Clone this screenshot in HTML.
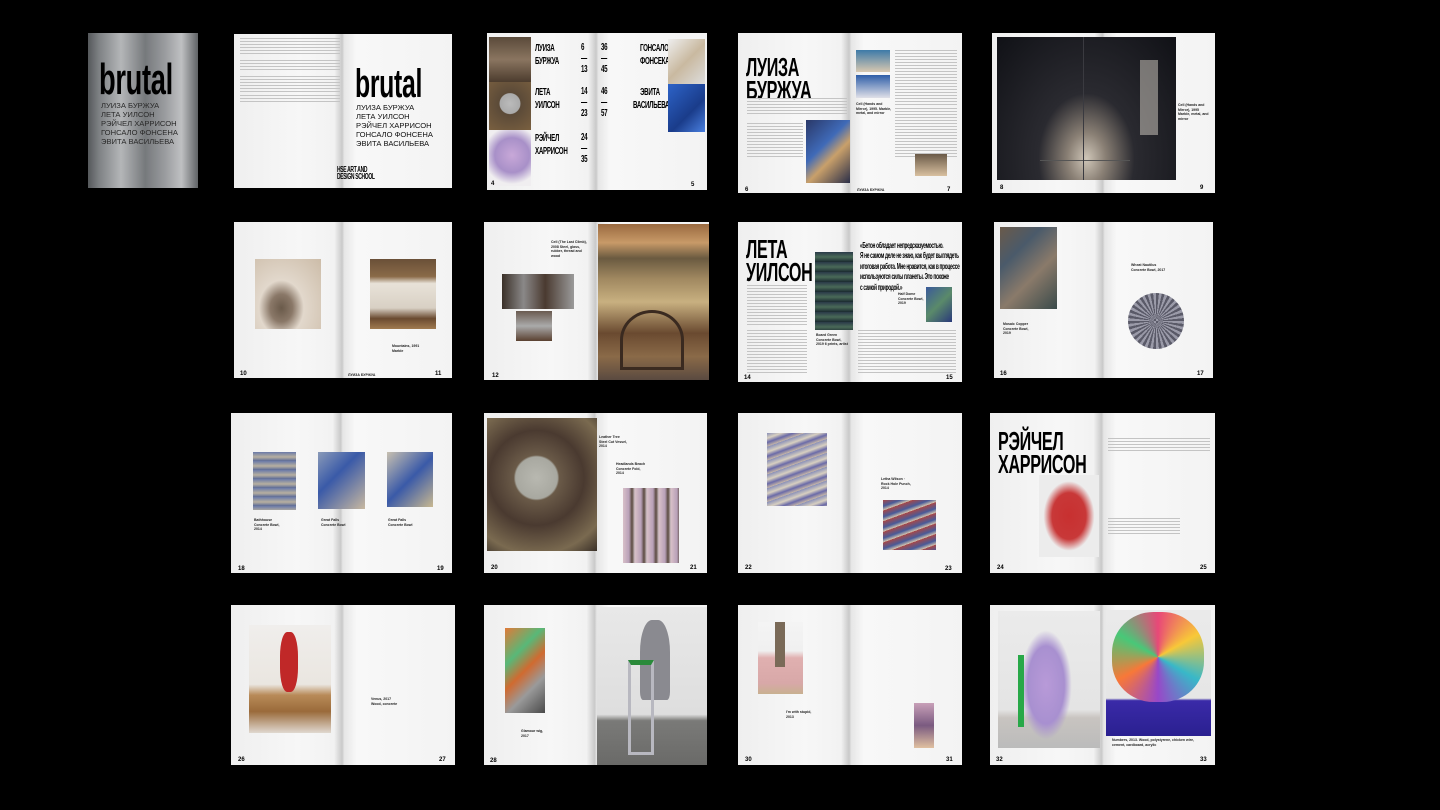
<!DOCTYPE html>
<html><head><meta charset="utf-8"><style>
body{margin:0;width:1440px;height:810px;background:#000;position:relative;overflow:hidden;font-family:"Liberation Sans",sans-serif}
div{position:absolute;box-sizing:border-box}
.s{background:linear-gradient(to right,#efefef 0,#f7f7f7 30%,#f2f2f2 46%,#c9c9c9 49.6%,#e6e6e6 50.6%,#f8f8f8 56%,#f3f3f3 100%)}
.h{font-family:"Liberation Sans","Noto Sans CJK SC",sans-serif;font-weight:bold;color:#000;line-height:.9;transform:scaleX(.62);transform-origin:left top;letter-spacing:-.5px;white-space:nowrap}
.n{font-size:6px;font-weight:bold;color:#000}
.c{font-size:3.5px;font-weight:bold;color:#222;line-height:1.3}
.tx{background:repeating-linear-gradient(#c4c4c4 0,#c4c4c4 1px,transparent 1px,transparent 3px)}
.nm{font-size:7.6px;line-height:9px;color:#111;white-space:nowrap}
</style></head><body>
<!-- cover -->
<div style="left:88px;top:33px;width:110px;height:155px;background:linear-gradient(to right,#55585b 0,#7e8184 10%,#b4b6b8 30%,#76797c 52%,#9a9c9f 70%,#bfc0c2 85%,#606366 100%)"></div>
<div class="h" style="left:99px;top:60px;font-size:44px">brutal</div>
<div class="nm" style="left:101px;top:101px;color:#2a2a2a">ЛУИЗА БУРЖУА<br>ЛЕТА УИЛСОН<br>РЭЙЧЕЛ ХАРРИСОН<br>ГОНСАЛО ФОНСЕНА<br>ЭВИТА ВАСИЛЬЕВА</div>

<!-- spread 1 -->
<div class="s" style="left:234px;top:34px;width:218px;height:154px"></div>
<div class="tx" style="left:240px;top:38px;width:100px;height:18px"></div>
<div class="tx" style="left:240px;top:60px;width:100px;height:12px"></div>
<div class="tx" style="left:240px;top:76px;width:100px;height:16px"></div>
<div class="tx" style="left:240px;top:95px;width:100px;height:8px"></div>
<div class="h" style="left:355px;top:66px;font-size:40px">brutal</div>
<div class="nm" style="left:356px;top:103px">ЛУИЗА БУРЖУА<br>ЛЕТА УИЛСОН<br>РЭЙЧЕЛ ХАРРИСОН<br>ГОНСАЛО ФОНСЕНА<br>ЭВИТА ВАСИЛЬЕВА</div>
<div class="h" style="left:337px;top:166px;font-size:8px">HSE ART AND<br>DESIGN SCHOOL</div>

<!-- spread 2 contents -->
<div class="s" style="left:487px;top:33px;width:220px;height:157px"></div>
<div style="left:489px;top:37px;width:42px;height:45px;background:linear-gradient(#5a4a3a,#8a7560 50%,#4c3c2e)"></div>
<div style="left:489px;top:82px;width:42px;height:48px;background:radial-gradient(circle at 50% 45%,#bbb 0,#aaa 30%,#5b4a38 32%,#7a6040 100%)"></div>
<div style="left:489px;top:130px;width:42px;height:56px;background:radial-gradient(circle at 55% 45%,#c8a8d8 0,#a890c8 45%,#f0eef0 75%)"></div>
<div class="h" style="left:535px;top:42px;font-size:10px;line-height:1.3">ЛУИЗА<br>БУРЖУА</div>
<div class="h" style="left:535px;top:86px;font-size:10px;line-height:1.3">ЛЕТА<br>УИЛСОН</div>
<div class="h" style="left:535px;top:132px;font-size:10px;line-height:1.3">РЭЙЧЕЛ<br>ХАРРИСОН</div>
<div class="h" style="left:581px;top:42px;font-size:10px;line-height:1.1">6<br>—<br>13</div>
<div class="h" style="left:581px;top:86px;font-size:10px;line-height:1.1">14<br>—<br>23</div>
<div class="h" style="left:581px;top:132px;font-size:10px;line-height:1.1">24<br>—<br>35</div>
<div class="h" style="left:601px;top:42px;font-size:10px;line-height:1.1">36<br>—<br>45</div>
<div class="h" style="left:601px;top:86px;font-size:10px;line-height:1.1">46<br>—<br>57</div>
<div class="h" style="left:640px;top:42px;font-size:10px;line-height:1.3">ГОНСАЛО<br>ФОНСЕКА</div>
<div class="h" style="left:633px;top:86px;font-size:10px;line-height:1.3">&nbsp;&nbsp;&nbsp;&nbsp;&nbsp;ЭВИТА<br>ВАСИЛЬЕВА</div>
<div style="left:668px;top:39px;width:37px;height:45px;background:linear-gradient(135deg,#eee,#c9b9a0 50%,#ddd)"></div>
<div style="left:668px;top:84px;width:37px;height:48px;background:linear-gradient(135deg,#2d63c8,#1a3c8a 60%,#4a80e0)"></div>
<div class="n" style="left:491px;top:181px">4</div><div class="n" style="left:691px;top:182px">5</div>

<!-- spread 3 -->
<div class="s" style="left:738px;top:33px;width:224px;height:160px"></div>
<div class="h" style="left:746px;top:56px;font-size:26px">ЛУИЗА<br>БУРЖУА</div>
<div class="tx" style="left:747px;top:98px;width:100px;height:18px"></div>
<div class="tx" style="left:747px;top:123px;width:56px;height:34px"></div>
<div style="left:806px;top:120px;width:44px;height:63px;background:linear-gradient(135deg,#2a3868,#3f6ab8 40%,#c9a06a 60%,#2a2e48)"></div>
<div style="left:856px;top:50px;width:34px;height:22px;background:linear-gradient(#3d7aa8,#d8c8b0)"></div>
<div style="left:856px;top:75px;width:34px;height:23px;background:linear-gradient(#2f5ea8,#e0e0e8)"></div>
<div class="c" style="left:856px;top:102px;width:36px">Cell (Hands and Mirror), 1995. Marble, metal, and mirror</div>
<div class="tx" style="left:895px;top:50px;width:62px;height:55px"></div>
<div class="tx" style="left:895px;top:108px;width:62px;height:50px"></div>
<div style="left:915px;top:154px;width:32px;height:22px;background:linear-gradient(#6a5a48,#d8c0a0)"></div>
<div class="n" style="left:745px;top:187px">6</div><div class="n" style="left:947px;top:187px">7</div>
<div class="c" style="left:857px;top:188px">ЛУИЗА БУРЖУА</div>

<!-- spread 4 -->
<div class="s" style="left:992px;top:33px;width:223px;height:160px"></div>
<div style="left:997px;top:37px;width:179px;height:143px;background:radial-gradient(ellipse at 50% 85%,#cfc6b8 0,#8a8075 15%,#2a2a30 38%,#101116 100%)"></div>
<div style="left:1040px;top:160px;width:90px;height:1px;background:#555"></div>
<div style="left:1083px;top:37px;width:1px;height:143px;background:#3a3a40"></div>
<div style="left:1140px;top:60px;width:18px;height:75px;background:#d8d2c8;opacity:.5"></div>
<div class="c" style="left:1178px;top:103px;width:34px">Cell (Hands and Mirror), 1995 Marble, metal, and mirror</div>
<div class="n" style="left:1000px;top:185px">8</div><div class="n" style="left:1200px;top:185px">9</div>

<!-- ROW 2 -->
<div class="s" style="left:234px;top:222px;width:218px;height:156px"></div>
<div style="left:255px;top:259px;width:66px;height:70px;background:radial-gradient(ellipse at 40% 70%,#6a5a4a 0,#8a7868 20%,#e2d8cc 40%,#ccbca8 100%)"></div>
<div style="left:370px;top:259px;width:66px;height:70px;background:linear-gradient(#6a5038 0,#8a6a48 25%,#e8e2d8 35%,#d8d0c4 70%,#6a4a30 85%,#a07a50 100%)"></div>
<div class="c" style="left:392px;top:344px">Mountains, 1991<br>Marble</div>
<div class="n" style="left:240px;top:371px">10</div><div class="n" style="left:435px;top:371px">11</div><div class="c" style="left:348px;top:373px">ЛУИЗА БУРЖУА</div>

<div class="s" style="left:484px;top:222px;width:225px;height:158px"></div>
<div style="left:598px;top:224px;width:111px;height:156px;background:linear-gradient(#9a6a40 0,#c89a68 12%,#6a5a40 22%,#a08860 35%,#c8b080 50%,#6a4a30 70%,#8a6a48 85%,#5a4a40 100%)"></div>
<div style="left:620px;top:310px;width:64px;height:60px;border:3px solid #3a2a20;border-radius:50% 50% 0 0"></div>
<div style="left:502px;top:274px;width:72px;height:35px;background:linear-gradient(to right,#3a3028,#8a8888 30%,#4a3a30 60%,#9a9a9a)"></div>
<div style="left:516px;top:311px;width:36px;height:30px;background:linear-gradient(#6a5a50,#aaa,#5a4030)"></div>
<div class="c" style="left:551px;top:240px;width:40px">Cell (The Last Climb), 2008 Steel, glass, rubber, thread and wood</div>
<div class="n" style="left:492px;top:373px">12</div>

<div class="s" style="left:738px;top:222px;width:224px;height:160px"></div>
<div class="h" style="left:746px;top:238px;font-size:26px">ЛЕТА<br>УИЛСОН</div>
<div class="tx" style="left:747px;top:285px;width:60px;height:40px"></div>
<div class="tx" style="left:747px;top:330px;width:60px;height:45px"></div>
<div style="left:815px;top:252px;width:38px;height:78px;background:repeating-linear-gradient(#2a3a48 0,#4a6a58 5px,#1a2a30 10px)"></div>
<div class="c" style="left:816px;top:333px;width:32px">Board Green Concrete Bowl, 2019 6 prints, artist</div>
<div class="h" style="left:860px;top:241px;font-size:8px;line-height:1.3;transform:scaleX(.6)">«Бетон обладает непредсказуемостью.<br>Я не самом деле не знаю, как будет выглядеть<br>итоговая работа. Мне нравится, как в процессе<br>используются силы планеты. Это похоже<br>с самой природой.»</div>
<div style="left:926px;top:287px;width:26px;height:35px;background:linear-gradient(135deg,#3a5a9a,#5a8a6a,#2a3a7a)"></div>
<div class="c" style="left:898px;top:292px;width:26px">Half Dome Concrete Bowl, 2019</div>
<div class="tx" style="left:858px;top:330px;width:98px;height:44px"></div>
<div class="n" style="left:744px;top:375px">14</div><div class="n" style="left:946px;top:375px">15</div>

<div class="s" style="left:994px;top:222px;width:219px;height:156px"></div>
<div style="left:1000px;top:227px;width:57px;height:82px;background:linear-gradient(135deg,#6a5a4a,#4a5a6a 30%,#8a7a6a 60%,#3a4a4a)"></div>
<div style="left:1128px;top:293px;width:56px;height:56px;border-radius:50%;background:repeating-conic-gradient(from 0deg at 50% 50%,#5a5a68 0 6deg,#9a9aa8 6deg 12deg)"></div>
<div class="c" style="left:1131px;top:263px;width:40px">Wheat Nautilus Concrete Bowl, 2017</div>
<div class="c" style="left:1003px;top:322px;width:30px">Mosaic Copper Concrete Bowl, 2019</div>
<div class="n" style="left:1000px;top:371px">16</div><div class="n" style="left:1197px;top:371px">17</div>

<!-- ROW 3 -->
<div class="s" style="left:231px;top:413px;width:221px;height:160px"></div>
<div style="left:253px;top:452px;width:43px;height:58px;background:repeating-linear-gradient(#6a7aa8 0,#b8b0a0 5px,#5a6a98 9px)"></div>
<div style="left:318px;top:452px;width:47px;height:57px;background:linear-gradient(135deg,#8a9ab8,#3a5aa8 40%,#c8b8a0)"></div>
<div style="left:387px;top:452px;width:46px;height:55px;background:linear-gradient(135deg,#c8c0b0,#3a5aa8 50%,#c8b890)"></div>
<div class="c" style="left:254px;top:518px;width:28px">Bathhouse Concrete Bowl, 2014</div>
<div class="c" style="left:321px;top:518px;width:30px">Great Falls Concrete Bowl</div>
<div class="c" style="left:388px;top:518px;width:30px">Great Falls Concrete Bowl</div>
<div class="n" style="left:238px;top:566px">18</div><div class="n" style="left:437px;top:566px">19</div>

<div class="s" style="left:484px;top:413px;width:223px;height:160px"></div>
<div style="left:487px;top:418px;width:110px;height:133px;background:radial-gradient(circle at 45% 45%,#b8b8b0 0,#a8a8a0 22%,#6a5a48 24%,#4a3a30 50%,#7a6a50 80%,#3a3028 100%)"></div>
<div style="left:623px;top:488px;width:56px;height:75px;background:repeating-linear-gradient(90deg,#d8c0c8 0,#b8a0b8 6px,#5a4a40 9px,#d8c8d0 12px)"></div>
<div class="c" style="left:599px;top:435px;width:30px">Leather Tree Steel Cut Vessel, 2014</div>
<div class="c" style="left:616px;top:462px;width:30px">Headlands Beach Concrete Fold, 2014</div>
<div class="n" style="left:491px;top:565px">20</div><div class="n" style="left:690px;top:565px">21</div>

<div class="s" style="left:738px;top:413px;width:224px;height:160px"></div>
<div style="left:767px;top:433px;width:60px;height:73px;background:repeating-linear-gradient(160deg,#8a90b8 0,#d8d0c0 5px,#6a6aa8 9px,#c8b8a8 13px)"></div>
<div style="left:883px;top:500px;width:53px;height:50px;background:repeating-linear-gradient(160deg,#a84848 0,#485a98 6px,#d8c8b0 10px)"></div>
<div class="c" style="left:881px;top:477px;width:30px">Letha Wilson · Rock Hole Punch, 2014</div>
<div class="n" style="left:745px;top:565px">22</div><div class="n" style="left:945px;top:566px">23</div>

<div class="s" style="left:990px;top:413px;width:225px;height:160px"></div>
<div class="h" style="left:998px;top:430px;font-size:26px">РЭЙЧЕЛ<br>ХАРРИСОН</div>
<div style="left:1039px;top:475px;width:60px;height:82px;background:radial-gradient(ellipse at 50% 50%,#c83030 0,#c83838 40%,#ececec 60%)"></div>
<div class="tx" style="left:1108px;top:438px;width:102px;height:14px"></div>
<div class="tx" style="left:1108px;top:518px;width:72px;height:16px"></div>
<div class="n" style="left:997px;top:565px">24</div><div class="n" style="left:1200px;top:565px">25</div>

<!-- ROW 4 -->
<div class="s" style="left:231px;top:605px;width:224px;height:160px"></div>
<div style="left:249px;top:625px;width:82px;height:108px;background:linear-gradient(#f0eeec 0,#eae6e0 55%,#b88a58 65%,#9a6a3a 80%,#e0d8d0 100%)"></div>
<div style="left:280px;top:632px;width:18px;height:60px;background:#c02828;border-radius:40%"></div>
<div class="c" style="left:371px;top:697px">Venus, 2017<br>Wood, concrete</div>
<div class="n" style="left:238px;top:757px">26</div><div class="n" style="left:439px;top:757px">27</div>

<div class="s" style="left:484px;top:605px;width:223px;height:160px"></div>
<div style="left:597px;top:607px;width:110px;height:158px;background:linear-gradient(#e8e8e8 0,#dedede 68%,#7a7a78 72%,#6a6a68 100%)"></div>
<div style="left:640px;top:620px;width:30px;height:80px;background:#8a8a90;border-radius:40% 40% 10% 10%"></div>
<div style="left:628px;top:660px;width:26px;height:95px;border:3px solid #b8b8c0;border-top:5px solid #2a8a3a"></div>
<div style="left:505px;top:628px;width:40px;height:85px;background:linear-gradient(135deg,#e07a38,#58b878 30%,#d06a30 50%,#9a9a9a 70%,#4a4a4a)"></div>
<div class="c" style="left:521px;top:729px;width:28px">Glamour wig, 2017</div>
<div class="n" style="left:490px;top:758px">28</div>

<div class="s" style="left:738px;top:605px;width:224px;height:160px"></div>
<div style="left:758px;top:622px;width:45px;height:72px;background:linear-gradient(#f4f4f4 0,#f0f0f0 40%,#e0b0b0 50%,#d8a8a8 85%,#c8b090 100%)"></div>
<div style="left:775px;top:622px;width:10px;height:45px;background:#7a6a58"></div>
<div class="c" style="left:786px;top:710px;width:30px">I'm with stupid, 2013</div>
<div style="left:914px;top:703px;width:20px;height:45px;background:linear-gradient(#c8a0b8,#7a5a80,#e0c0a0)"></div>
<div class="n" style="left:745px;top:757px">30</div><div class="n" style="left:946px;top:757px">31</div>

<div class="s" style="left:990px;top:605px;width:225px;height:160px"></div>
<div style="left:998px;top:611px;width:102px;height:137px;background:linear-gradient(#ebebeb 0,#e4e4e4 72%,#c8c4c0 78%,#bbb 100%)"></div>
<div style="left:1020px;top:630px;width:52px;height:110px;background:radial-gradient(ellipse at 50% 50%,#b89ad8 0,#a890d0 50%,transparent 70%)"></div>
<div style="left:1018px;top:655px;width:6px;height:72px;background:#28a848"></div>
<div style="left:1106px;top:610px;width:105px;height:126px;background:linear-gradient(#eaeaea 0,#e6e6e6 70%,#3a2aa8 72%,#2a2090 100%)"></div>
<div style="left:1112px;top:612px;width:92px;height:90px;border-radius:45%;background:conic-gradient(#e84878,#f8c838,#38b8c8,#9848c8,#f87838,#48c878,#e84878)"></div>
<div class="c" style="left:1112px;top:738px;width:95px">Numbers, 2013. Wood, polystyrene, chicken wire, cement, cardboard, acrylic</div>
<div class="n" style="left:996px;top:757px">32</div><div class="n" style="left:1200px;top:757px">33</div>
</body></html>
